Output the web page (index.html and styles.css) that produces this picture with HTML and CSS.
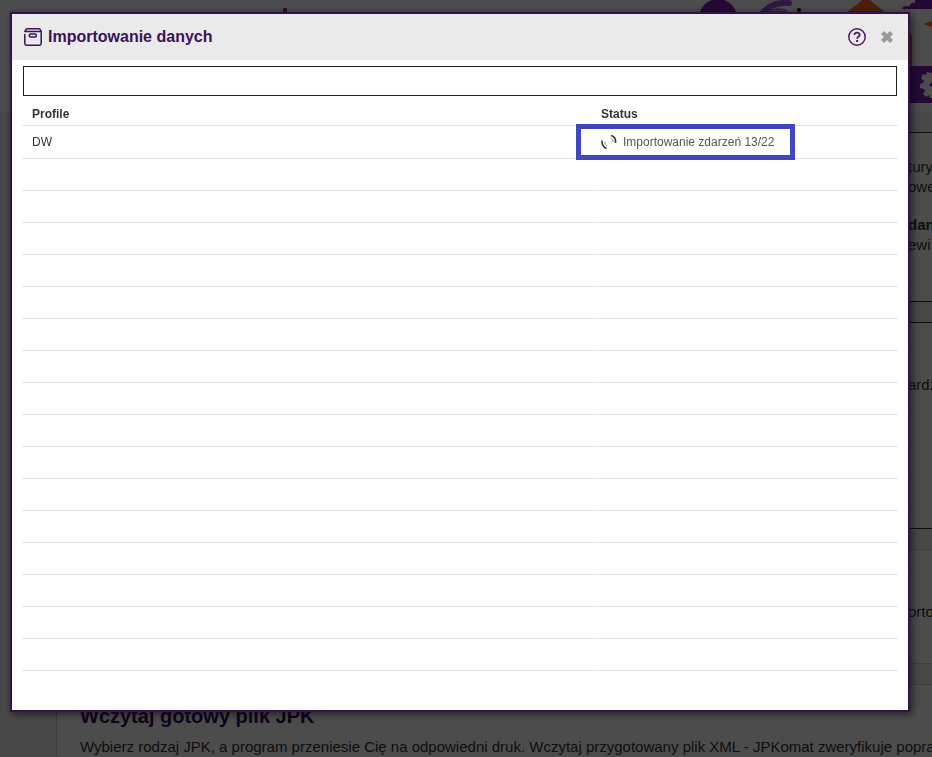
FILE: index.html
```
<!DOCTYPE html>
<html lang="pl">
<head>
    <meta charset="UTF-8">
    <title>Importowanie danych</title>
    <link rel="stylesheet" href="styles.css">
</head>
<body>
    <div class="page">
        <div class="banner">
            <svg class="banner-mark" width="6" height="12" viewBox="0 0 6 12"><rect x="1" y="8" width="4" height="4" fill="#b04030"/></svg>
            <svg class="banner-art" width="252" height="104" viewBox="0 0 252 104">
                <circle cx="38" cy="18" r="19" fill="#7a1fb8"/>
                <circle cx="98" cy="26" r="18" fill="#b98ad8"/>
                <path d="M79 22C82 8 94 2 109 3" fill="none" stroke="#a050e0" stroke-width="6" stroke-linecap="round"/>
                <circle cx="119" cy="10" r="2" fill="#000"/>
                <path d="M186 -3L206 13H166Z" fill="#ff6a20"/>
                <path d="M222 9C223 5 228 6 229 7C230 3 233 2 235 3V0H252V9Z" fill="#7a1fb8"/>
                <path d="M243 24L252 21V27Z" fill="#ff6a20"/>
                <path d="M220 32H228Q232 32 232 38V66H220Z" fill="#ff6a20"/>
                <path d="M220 66H252V103H220Z" fill="#7a1fb8"/>
                <path d="M252 73L247 72L246 75L243 74L241 78L244 81L243 83L240 84V88L244 89L245 91L243 94L246 97L249 95L250 98H252V87L249 85L252 82Z" fill="#fff"/>
            </svg>
        </div>
        <div class="cards">
            <section class="card card-news">
                <p class="card-aside">tury<br>owe</p>
                <p class="card-aside"><b>dan</b><br>ewi</p>
            </section>
            <section class="card card-check">
                <p class="card-aside">ardz</p>
            </section>
            <section class="card card-soft card-import">
                <p class="card-aside">ortow</p>
            </section>
            <section class="card card-soft card-jpk">
                <h2>Wczytaj gotowy plik JPK</h2>
                <p>Wybierz rodzaj JPK, a program przeniesie Cię na odpowiedni druk. Wczytaj przygotowany plik XML - JPKomat zweryfikuje poprawność</p>
            </section>
        </div>
    </div>

    <div class="overlay">
        <div class="modal" role="dialog" aria-labelledby="modal-title">
            <div class="modal-header">
                <svg class="modal-icon" width="18" height="18" viewBox="0 0 18 18" fill="none" stroke="#3b1259" stroke-width="1.5" stroke-linecap="round" stroke-linejoin="round">
                    <path d="M0.8 3.5L2 1.4Q2.4 0.8 3 0.8H15Q15.6 0.8 16 1.4L17.2 3.5Z"/>
                    <path d="M0.8 6.5V15.500Q0.8 17.2 2.5 17.2H15.5Q17.2 17.2 17.2 15.5V3.5"/>
                    <rect x="5.2" y="6" width="7.2" height="3" rx="1.5"/>
                </svg>
                <h1 id="modal-title">Importowanie danych</h1>
                <button class="icon-button" type="button" aria-label="Pomoc">
                    <svg width="18" height="18" viewBox="0 0 18 18" fill="none" stroke="#4b1a66">
                        <circle cx="9" cy="9" r="8.2" stroke-width="1.5"/>
                        <path d="M6.4 7C6.3 3.7 11.8 3.8 11.7 6.9C11.6 8.7 9.1 8.7 9.1 10.8" stroke-width="1.8"/>
                        <path d="M9.1 12V14" stroke-width="2"/>
                    </svg>
                </button>
                <button class="icon-button" type="button" aria-label="Zamknij">
                    <svg width="18" height="18" viewBox="0 0 18 18">
                        <path d="M4.5 4.5L13.5 13.5M13.5 4.5L4.5 13.5" stroke="#999" stroke-width="4.4"/>
                    </svg>
                </button>
            </div>
            <div class="modal-body">
                <input class="search" type="text" aria-label="Szukaj">
                <table class="profiles">
                    <thead>
                        <tr><th>Profile</th><th class="col-status">Status</th></tr>
                    </thead>
                    <tbody>
                        <tr class="active">
                            <td>DW</td>
                            <td class="status-cell">
                                <div class="status">
                                    <svg width="16" height="16" viewBox="0 0 16 16" fill="none" stroke="#333">
                                        <path d="M1 6.500C0.800 10 2 13 5.500 14.500" stroke-width="1.6"/>
                                        <path d="M4 7.500C4 9.500 4.500 11 6 12" stroke="#888"/>
                                        <path d="M10 1.500C13.500 2.500 15 5 14.500 9" stroke-width="1.6"/>
                                        <path d="M9.500 4C11.500 5 12 6 12 8" stroke="#888"/>
                                    </svg>
                                    <span>Importowanie zdarzeń 13/22</span>
                                </div>
                                <div class="highlight"></div>
                            </td>
                        </tr>
                        <tr><td></td><td></td></tr>
                        <tr><td></td><td></td></tr>
                        <tr><td></td><td></td></tr>
                        <tr><td></td><td></td></tr>
                        <tr><td></td><td></td></tr>
                        <tr><td></td><td></td></tr>
                        <tr><td></td><td></td></tr>
                        <tr><td></td><td></td></tr>
                        <tr><td></td><td></td></tr>
                        <tr><td></td><td></td></tr>
                        <tr><td></td><td></td></tr>
                        <tr><td></td><td></td></tr>
                        <tr><td></td><td></td></tr>
                        <tr><td></td><td></td></tr>
                        <tr><td></td><td></td></tr>
                        <tr><td></td><td></td></tr>
                    </tbody>
                </table>
            </div>
        </div>
    </div>
</body>
</html>
```
FILE: styles.css
```
* {
    box-sizing: border-box;
}
body {
    margin: 0;
    font-family: "Liberation Sans", Arial, sans-serif;
    color: #333;
}
h1, h2, p {
    margin: 0;
}
.page {
    height: 100vh;
    overflow: hidden;
    background-color: #f0f0f0;
    font-size: 15px;
    line-height: 20px;
}
.banner {
    display: flex;
    justify-content: space-between;
    height: 112px;
    padding-left: 282px;
    background-color: #fff;
}
.cards {
    display: flex;
    flex-direction: column;
    gap: 20px;
    margin-left: 56px;
    padding-top: 20px;
}
.card {
    display: flex;
    flex-direction: column;
    flex-shrink: 0;
    background-color: #fff;
    border: 1px solid #333;
    border-right: 0;
}
.card-soft {
    border-color: #ccc;
}
.card-news {
    gap: 18px;
    padding: 24px 0 46px;
}
.card-check {
    padding: 52px 0 133px;
}
.card-import {
    padding: 52px 0 41px;
}
.card-jpk {
    gap: 10px;
    padding: 20px 0 40px 23px;
    white-space: nowrap;
}
.card-jpk h2 {
    font-size: 20px;
    line-height: 22px;
    color: #3b0a5c;
}
.card-aside {
    align-self: flex-end;
    width: 24px;
    white-space: nowrap;
}
.overlay {
    position: fixed;
    inset: 0;
    padding: 12px 22px 12px 10px;
    background-color: rgba(0, 0, 0, 0.7);
}
.modal {
    background-color: #fff;
    border: 2px solid #360f52;
    box-shadow: 2px 2px 8px rgba(0, 0, 0, 0.6);
}
.modal-header {
    display: flex;
    align-items: center;
    gap: 6px;
    height: 46px;
    padding: 0 12px;
    background-color: #eaeaea;
}
.modal-header h1 {
    flex: 1;
    font-size: 16px;
    color: #3b1259;
}
.icon-button {
    display: flex;
    padding: 0;
    border: 0;
    background: none;
    cursor: pointer;
}
.icon-button + .icon-button {
    margin-left: 6px;
}
.modal-body {
    padding: 6px 9px 39px;
}
.search {
    display: block;
    width: calc(100% - 4px);
    height: 30px;
    margin: 0 2px;
    padding: 0 8px;
    border: 1px solid #222;
    background-color: #fff;
}
.profiles {
    width: 100%;
    margin-top: 6px;
    border-spacing: 1px 0;
    table-layout: fixed;
    font-size: 12px;
}
.profiles th, .profiles td {
    height: 32px;
    padding: 0 3px;
    border-bottom: 1px solid #e4e4e4;
    text-align: left;
}
.profiles th {
    height: 24px;
}
.profiles .active td {
    height: 33px;
}
.profiles th:first-child, .profiles td:first-child {
    padding-left: 10px;
}
.profiles .col-status {
    width: 300px;
}
.status-cell {
    position: relative;
}
.status {
    display: flex;
    align-items: center;
    gap: 6px;
    color: #555;
}
.highlight {
    position: absolute;
    top: -2px;
    left: -22px;
    width: 219px;
    height: 36px;
    border: 5px solid #4046c4;
}
```
